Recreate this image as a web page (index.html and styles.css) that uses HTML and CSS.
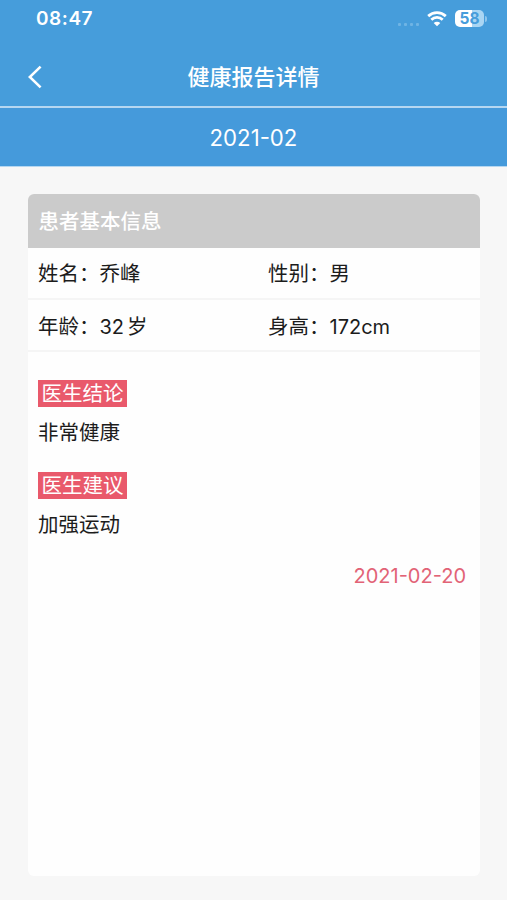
FILE: index.html
```html
<!DOCTYPE html>
<html lang="zh-CN">
<head>
    <meta charset="UTF-8">
    <meta name="viewport" content="width=device-width, initial-scale=1.0">
    <title>健康报告详情</title>
    <link rel="stylesheet" href="styles.css">
</head>
<body>

    <header class="header">
        <div class="status-bar">
            <span class="time">08:47</span>
            <div class="status-icons">
                <div class="signal"><i></i><i></i><i></i><i></i></div>
                <svg class="wifi" viewBox="0 0 20 16" width="20" height="16">
                    <path d="M1.2 5.1C6.2.5 13.8.5 18.8 5.1M4.3 8.7c3.2-3 8.2-3 11.4 0" fill="none" stroke="#fff" stroke-width="2.8"/>
                    <path d="M10 15.2l-3.3-3.3c1.8-1.7 4.8-1.7 6.6 0z" fill="#fff"/>
                </svg>
                <div class="battery">58</div>
                <span class="battery-cap"></span>
            </div>
        </div>
        <nav class="navbar">
            <a class="back" href="#" aria-label="返回">
                <svg viewBox="0 0 14 24" width="14" height="24">
                    <path d="M12.6 1.6L1.8 12l10.8 10.4" fill="none" stroke="#fff" stroke-width="2.6"/>
                </svg>
            </a>
            <h1>健康报告详情</h1>
        </nav>
    </header>

    <div class="month">2021-02</div>

    <main class="card">
        <h2 class="card-title">患者基本信息</h2>
        <div class="info-row">
            <span>姓名：乔峰</span>
            <span>性别：男</span>
        </div>
        <div class="info-row">
            <span>年龄：<span class="num">32</span><span class="unit">岁</span></span>
            <span>身高：<span class="num">172cm</span></span>
        </div>

        <div class="report">
            <section class="report-item">
                <h3 class="tag">医生结论</h3>
                <p>非常健康</p>
            </section>
            <section class="report-item">
                <h3 class="tag">医生建议</h3>
                <p>加强运动</p>
            </section>
            <div class="report-date">2021-02-20</div>
        </div>
    </main>

</body>
</html>
```

FILE: styles.css
```css
* {
    margin: 0;
    padding: 0;
    box-sizing: border-box;
}

body {
    height: 900px;
    display: flex;
    flex-direction: column;
    background: #f7f7f7;
    color: #1c1c1c;
    font-family: Inter, "Noto Sans CJK SC", sans-serif;
    font-size: 20.5px;
    overflow: hidden;
}

/* Header */
.header {
    height: 108px;
    background: #469ddb;
    border-bottom: 2px solid #b5d7f1;
    color: white;
}

.status-bar {
    display: flex;
    justify-content: space-between;
    height: 38px;
    padding: 0 20px 0 36px;
    align-items: center;
}

.time {
    font-size: 19px;
    font-weight: 600;
    line-height: 38px;
    letter-spacing: 0.55px;
}

.status-icons {
    display: flex;
    align-items: center;
}

.wifi {
    margin-top: -1px;
}

.signal {
    display: flex;
    gap: 3px;
    margin: 10px 8px 0 0;
}

.signal i {
    width: 3px;
    height: 3px;
    border-radius: 1px;
    background: #6fb4e4;
}

.battery {
    width: 29px;
    height: 17px;
    margin: -1px 0 0 8px;
    border-radius: 5px;
    background: linear-gradient(90deg, #fff 58%, #a9d5f3 58%);
    color: #469ddb;
    font-size: 15.5px;
    font-weight: 700;
    line-height: 17px;
    text-align: center;
}

.battery-cap {
    width: 2px;
    height: 6px;
    margin-left: 1px;
    border-radius: 0 2px 2px 0;
    background: #8dc5ed;
}

.navbar {
    display: flex;
    align-items: center;
    height: 68px;
    padding: 9px 28px 0;
}

.navbar::after {
    content: '';
    width: 14px;
}

.back svg {
    display: block;
}

.navbar h1 {
    flex: 1;
    font-size: 22px;
    font-weight: 500;
    line-height: 32px;
    text-align: center;
}

.month {
    height: 59px;
    background: #459adb;
    border-bottom: 1px solid #b5d7f1;
    color: white;
    font-size: 22.2px;
    line-height: 60px;
    text-align: center;
}

/* Report card */
.card {
    width: 452px;
    height: 682px;
    margin: 27px 0 0 28px;
    border-radius: 6px;
    background: #fefefe;
    overflow: hidden;
}

.card-title {
    height: 54px;
    padding-left: 10.5px;
    background: #cbcbcb;
    color: white;
    font-size: 20.5px;
    font-weight: 500;
    line-height: 55px;
}

.info-row {
    display: grid;
    grid-template-columns: 230px 1fr;
    height: 52px;
    padding-left: 10px;
    border-bottom: 2px solid #f5f5f5;
    line-height: 52px;
}

.info-row + .info-row {
    line-height: 53px;
}

.num {
    font-size: 20px;
}

.unit {
    margin-left: 3px;
}

.report {
    padding: 28px 14px 0 10px;
}

.report-item {
    height: 92px;
}

.tag {
    width: 89px;
    height: 27px;
    background: #e9596b;
    color: white;
    font-size: 20.5px;
    font-weight: 400;
    line-height: 28px;
    text-align: center;
}

.report-item p {
    margin-top: 11px;
    line-height: 30px;
}

.report-date {
    color: #e26376;
    font-size: 20px;
    line-height: 24px;
    text-align: right;
}
```
